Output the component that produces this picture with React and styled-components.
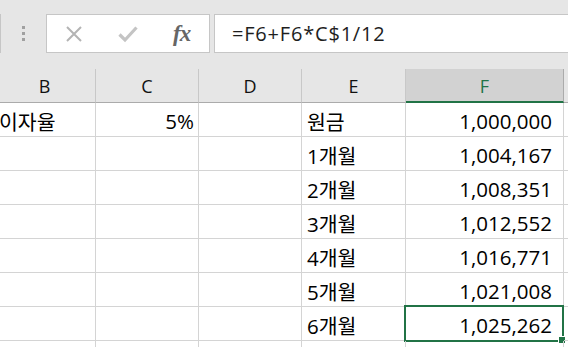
import React from "react";
import styled, { createGlobalStyle } from "styled-components";

const Global = createGlobalStyle`
  html, body { margin: 0; padding: 0; background: #e6e6e6; overflow: hidden; }
  body { font-family: "Open Sans", "Noto Sans CJK KR", sans-serif; }
`;

const Page = styled.div`
  width: 568px;
  height: 347px;
  overflow: hidden;
  background: #e6e6e6;
`;

const FormulaBar = styled.div`
  display: flex;
  align-items: stretch;
  height: 39px;
  margin-top: 14px;
  margin-bottom: 16px;
`;

const NameBoxEdge = styled.div`
  width: 1px;
  background: #c6c6c6;
`;

const Grip = styled.div`
  width: 45px;
  display: flex;
  flex-direction: column;
  align-items: center;
  justify-content: center;
  gap: 3px;
  & > span {
    width: 3px;
    height: 3px;
    background: #a0a0a0;
  }
`;

const IconBox = styled.div`
  width: 164px;
  box-sizing: border-box;
  background: #fff;
  border: 1px solid #c6c6c6;
  display: flex;
  align-items: center;
  position: relative;
`;

const IconSlot = styled.div`
  position: absolute;
  top: 0;
  bottom: 0;
  left: ${(p) => p.$left}px;
  display: flex;
  align-items: center;
`;

const Fx = styled.span`
  font-family: "Liberation Serif", "DejaVu Serif", serif;
  font-style: italic;
  font-weight: bold;
  font-size: 23px;
  color: #666;
  letter-spacing: -1px;
`;

const FormulaInput = styled.div`
  flex: 1;
  margin-left: 4px;
  background: #fff;
  border: 1px solid #c6c6c6;
  border-right: none;
  display: flex;
  align-items: center;
  padding-left: 17px;
  font-size: 20px;
  color: #1e1e1e;
  letter-spacing: 0.8px;
`;

const Sheet = styled.div`
  display: grid;
  grid-template-columns: 102px 103px 103px 104px 158px 1fr;
  margin-left: -6px;
  background: #fff;
`;

const HeaderCell = styled.div`
  box-sizing: border-box;
  height: 34px;
  background: ${(p) => (p.$selected ? "#d2d2d2" : "#e6e6e6")};
  border-right: 1px solid ${(p) => (p.$selected ? "#ababab" : "#c8c8c8")};
  border-bottom: ${(p) => (p.$selected ? "2px solid #217346" : "1px solid #ababab")};
  display: flex;
  align-items: center;
  justify-content: center;
  font-size: 18px;
  color: ${(p) => (p.$selected ? "#217346" : "#111")};
  padding-top: 1px;
`;

const Cell = styled.div`
  box-sizing: border-box;
  height: 34px;
  position: relative;
  border-right: 1px solid #d4d4d4;
  border-bottom: 1px solid #d4d4d4;
  display: flex;
  align-items: center;
  justify-content: ${(p) => (p.$align === "right" ? "flex-end" : "flex-start")};
  padding: 2px ${(p) => p.$pr ?? 5}px 0 ${(p) => p.$pl ?? 5}px;
  font-size: 20.5px;
  color: #000;
  white-space: nowrap;
`;

const Selection = styled.div`
  position: absolute;
  left: -2px;
  top: -2px;
  right: -1px;
  bottom: -2px;
  border: 2px solid #217346;
  pointer-events: none;
`;

const FillHandle = styled.div`
  position: absolute;
  right: -3px;
  bottom: -3px;
  width: 6px;
  height: 6px;
  background: #217346;
  box-shadow: 0 0 0 1px #fff;
`;

const XIcon = () => (
  <svg width="18" height="18" viewBox="0 0 18 18">
    <path d="M2 2 L16 16 M16 2 L2 16" stroke="#b4b4b4" strokeWidth="2" fill="none" />
  </svg>
);

const CheckIcon = () => (
  <svg width="20" height="18" viewBox="0 0 20 18">
    <path d="M1.5 9.5 L7 15 L18.5 2.5" stroke="#c4c4c4" strokeWidth="3.2" fill="none" />
  </svg>
);

const columns = ["B", "C", "D", "E", "F", ""];

const rows = [
  { b: "이자율", c: "5%", e: "원금", f: "1,000,000" },
  { e: "1개월", f: "1,004,167" },
  { e: "2개월", f: "1,008,351" },
  { e: "3개월", f: "1,012,552" },
  { e: "4개월", f: "1,016,771" },
  { e: "5개월", f: "1,021,008" },
  { e: "6개월", f: "1,025,262", selected: true },
  {},
];

export default function App() {
  return (
    <Page>
      <Global />
      <FormulaBar>
        <NameBoxEdge />
        <Grip>
          <span />
          <span />
          <span />
        </Grip>
        <IconBox>
          <IconSlot $left={18}>
            <XIcon />
          </IconSlot>
          <IconSlot $left={71}>
            <CheckIcon />
          </IconSlot>
          <IconSlot $left={126}>
            <Fx>fx</Fx>
          </IconSlot>
        </IconBox>
        <FormulaInput>=F6+F6*C$1/12</FormulaInput>
      </FormulaBar>
      <Sheet>
        {columns.map((c) => (
          <HeaderCell key={c || "g"} $selected={c === "F"}>
            {c}
          </HeaderCell>
        ))}
        {rows.map((r, i) => (
          <React.Fragment key={i}>
            <Cell $pl={5}>{r.b}</Cell>
            <Cell $align="right" $pr={4}>{r.c}</Cell>
            <Cell />
            <Cell>{r.e}</Cell>
            <Cell $align="right" $pr={11}>
              {r.f}
              {r.selected && (
                <Selection>
                  <FillHandle />
                </Selection>
              )}
            </Cell>
            <Cell />
          </React.Fragment>
        ))}
      </Sheet>
    </Page>
  );
}
